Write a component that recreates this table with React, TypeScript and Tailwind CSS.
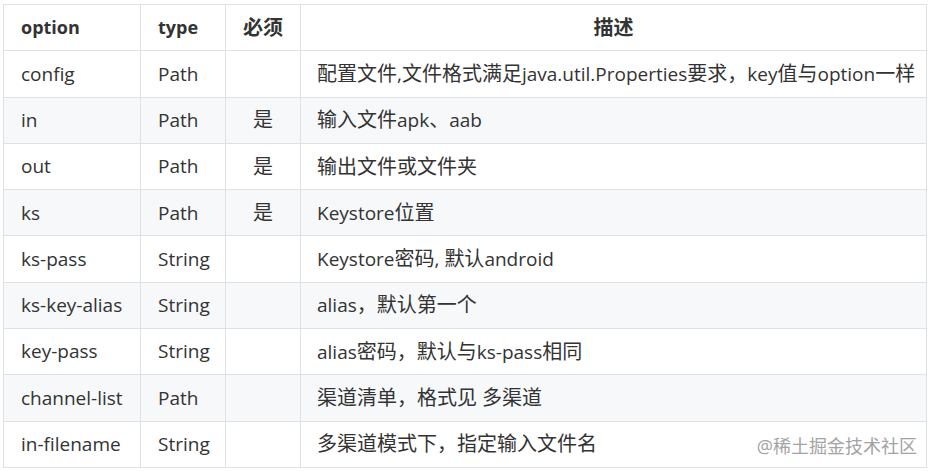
import React from "react";

type Row = { option: string; type: string; required?: boolean; desc: string };

const rows: Row[] = [
    {option: "config", type: "Path", desc: "配置文件,文件格式满足java.util.Properties要求，key值与option一样"},
    {option: "in", type: "Path", required: true, desc: "输入文件apk、aab"},
    {option: "out", type: "Path", required: true, desc: "输出文件或文件夹"},
    {option: "ks", type: "Path", required: true, desc: "Keystore位置"},
    {option: "ks-pass", type: "String", desc: "Keystore密码, 默认android"},
    {option: "ks-key-alias", type: "String", desc: "alias，默认第一个"},
    {option: "key-pass", type: "String", desc: "alias密码，默认与ks-pass相同"},
    {option: "channel-list", type: "Path", desc: "渠道清单，格式见 多渠道"},
    {option: "in-filename", type: "String", desc: "多渠道模式下，指定输入文件名"},
];

const font = {fontFamily: '"Open Sans", "Noto Sans CJK SC", sans-serif'};

// CJK glyphs in the shot run a bit larger than the latin ones
function Mixed({text}: { text: string }) {
    const parts = text.split(/([\u3000-\u9fff\uff00-\uffef]+)/).filter(Boolean);
    return <>
        {parts.map((p, i) => /[\u3000-\u9fff\uff00-\uffef]/.test(p)
            ? <span key={i} className="text-[20px]">{p}</span>
            : <span key={i}>{p}</span>)}
    </>
}

export default function App() {
    return <div className="relative w-[933px] h-[471px] bg-white overflow-hidden pl-[3px] pt-[4px]" style={font}>
        <table className="border-collapse text-[19px] text-[#333] table-fixed w-[924px]">
            <thead>
            <tr className="h-[46.3px] bg-white">
                <th className="w-[137px] border border-[#dfe2e5] pl-[17px] text-left font-bold text-[18px]">option</th>
                <th className="w-[85px] border border-[#dfe2e5] pl-[17px] text-left font-bold text-[18px]">type</th>
                <th className="w-[75px] border border-[#dfe2e5] text-center font-bold text-[20px]">必须</th>
                <th className="w-[626px] border border-[#dfe2e5] text-center font-bold text-[20px]">描述</th>
            </tr>
            </thead>
            <tbody>
            {rows.map((row, key) =>
                <tr key={key} className={`h-[46.3px] ${key % 2 === 1 ? "bg-[#f6f8fa]" : "bg-white"}`}>
                    <td className="border border-[#dfe2e5] pl-[17px] whitespace-nowrap">{row.option}</td>
                    <td className="border border-[#dfe2e5] pl-[17px]">{row.type}</td>
                    <td className="border border-[#dfe2e5] text-center text-[20px]">{row.required ? "是" : ""}</td>
                    <td className="border border-[#dfe2e5] pl-[16px] whitespace-nowrap"><Mixed text={row.desc}/></td>
                </tr>
            )}
            </tbody>
        </table>
        <div className="absolute right-[16px] top-[433px] text-[18px] text-[#a3a3a3]">@稀土掘金技术社区</div>
    </div>
}
